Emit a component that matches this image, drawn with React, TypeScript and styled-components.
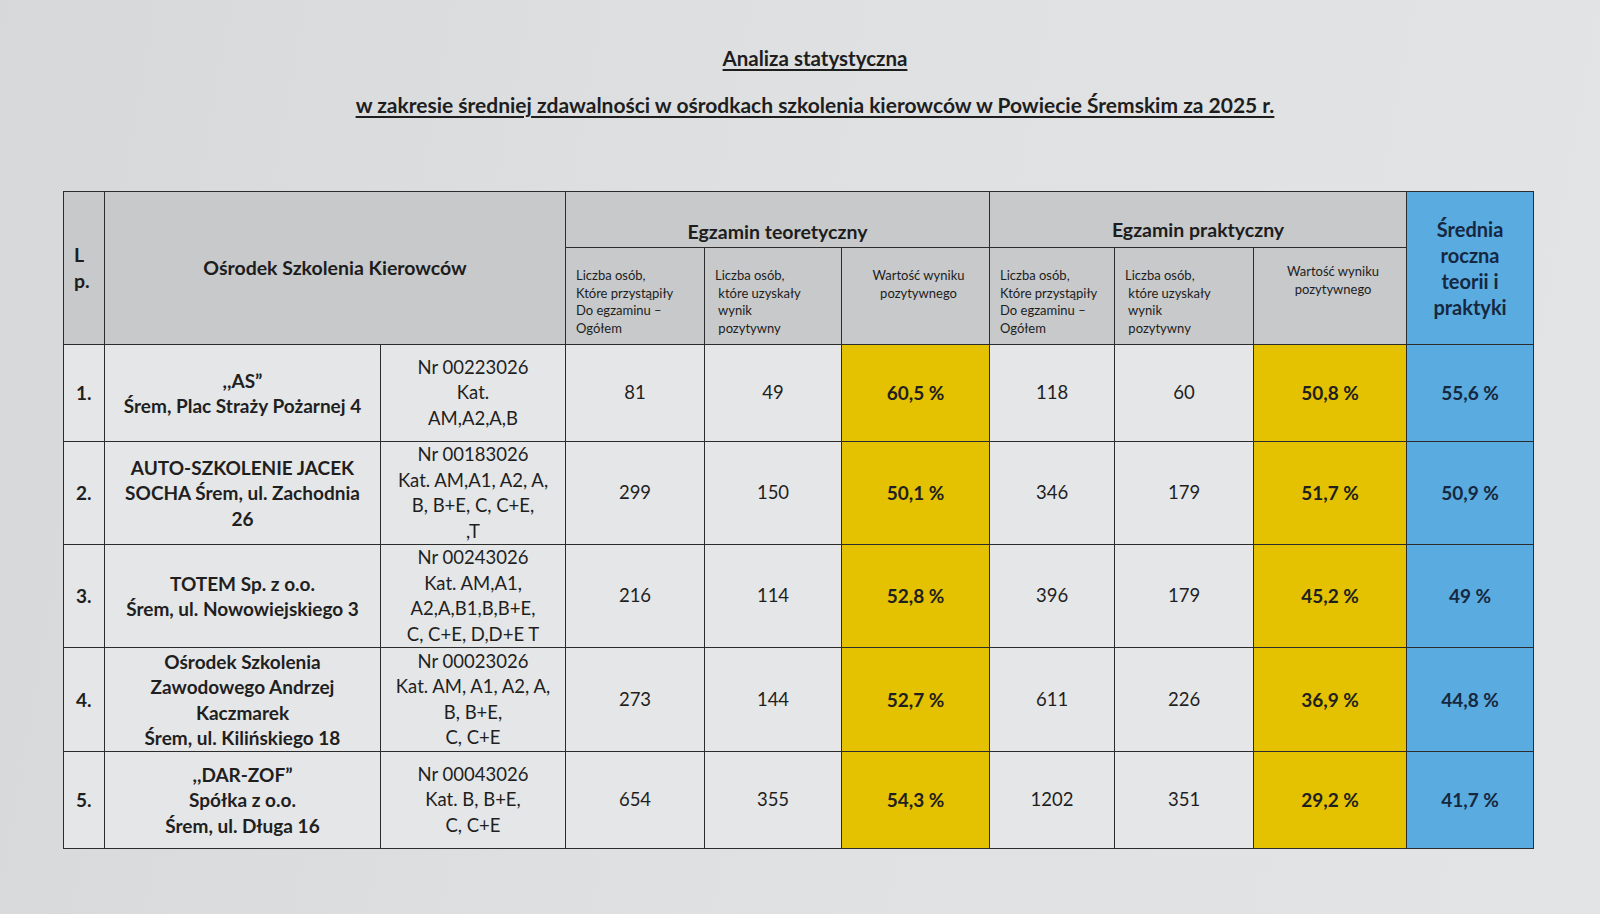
import React from 'react'
import styled, { createGlobalStyle } from 'styled-components'

const GlobalStyle = createGlobalStyle`
  html, body {
    margin: 0;
    padding: 0;
  }
  body {
    background: linear-gradient(100deg, #d6d8d9 0%, #dfe0e1 45%, #e3e4e5 100%);
    font-family: Lato, 'Liberation Sans', sans-serif;
    color: #222;
  }
`

const Page = styled.div`
  width: 1600px;
  height: 914px;
  overflow: hidden;
  box-sizing: border-box;
  padding-top: 44px;
`

const Heading = styled.h1<{ $size: number; $gap: number }>`
  margin: 0 0 ${p => p.$gap}px 0;
  padding-left: 30px;
  text-align: center;
  font-size: ${p => p.$size}px;
  font-weight: 700;
  line-height: 28px;
  color: #1e1e1e;
  text-decoration: underline;
  text-decoration-thickness: 1.5px;
  text-underline-offset: 3px;
`

const Table = styled.table`
  margin-left: 63px;
  width: 1470px;
  border-collapse: collapse;
  table-layout: fixed;
  border: 1.5px solid #2c2c2c;
`

const Cell = styled.td<{ $bg?: string; $align?: string; $bold?: boolean; $navy?: boolean }>`
  border: 1.5px solid #2c2c2c;
  background: ${p => p.$bg || '#e5e6e7'};
  text-align: ${p => p.$align || 'center'};
  font-weight: ${p => (p.$bold ? 700 : 400)};
  color: ${p => (p.$navy ? '#16283f' : '#1f1f1f')};
  font-size: ${p => (p.$bold ? 19 : 18.5)}px;
  line-height: 25.5px;
  padding: 0 2px;
  vertical-align: middle;
`

const HeadCell = styled.th<{ $bg?: string; $align?: string; $valign?: string; $navy?: boolean; $size?: number }>`
  border: 1.5px solid #2c2c2c;
  background: ${p => p.$bg || '#c7c9cb'};
  text-align: ${p => p.$align || 'center'};
  vertical-align: ${p => p.$valign || 'middle'};
  color: ${p => (p.$navy ? '#16283f' : '#1d1d1d')};
  font-size: ${p => p.$size || 19.5}px;
  font-weight: 700;
  line-height: 26px;
  padding: 0;
`

const SubHead = styled.th<{ $align?: string }>`
  border: 1.5px solid #2c2c2c;
  background: #c7c9cb;
  text-align: ${p => p.$align || 'left'};
  vertical-align: top;
  font-size: 13px;
  font-weight: 400;
  line-height: 17.7px;
  color: #1d1d1d;
  padding: 19px 4px 0 10px;
  white-space: nowrap;
`

const LpText = styled.div`
  padding-left: 10px;
  text-align: left;
`

const widths = [41, 276, 185, 139, 137, 148, 125, 139, 153, 127]

type Row = {
  lp: string
  name: string[]
  nr: string[]
  t1: string
  t2: string
  tp: string
  p1: string
  p2: string
  pp: string
  avg: string
  h: number
}

const rows: Row[] = [
  {
    lp: '1.',
    name: [',,AS\u201D', 'Śrem, Plac Straży Pożarnej 4'],
    nr: ['Nr 00223026', 'Kat.', 'AM,A2,A,B'],
    t1: '81', t2: '49', tp: '60,5 %', p1: '118', p2: '60', pp: '50,8 %', avg: '55,6 %', h: 97,
  },
  {
    lp: '2.',
    name: ['AUTO-SZKOLENIE JACEK', 'SOCHA Śrem, ul. Zachodnia', '26'],
    nr: ['Nr 00183026', 'Kat. AM,A1, A2, A,', 'B, B+E, C, C+E,', ',T'],
    t1: '299', t2: '150', tp: '50,1 %', p1: '346', p2: '179', pp: '51,7 %', avg: '50,9 %', h: 102,
  },
  {
    lp: '3.',
    name: ['TOTEM Sp. z o.o.', 'Śrem, ul. Nowowiejskiego 3'],
    nr: ['Nr 00243026', 'Kat. AM,A1,', 'A2,A,B1,B,B+E,', 'C, C+E, D,D+E T'],
    t1: '216', t2: '114', tp: '52,8 %', p1: '396', p2: '179', pp: '45,2 %', avg: '49 %', h: 102,
  },
  {
    lp: '4.',
    name: ['Ośrodek Szkolenia', 'Zawodowego Andrzej', 'Kaczmarek', 'Śrem, ul. Kilińskiego 18'],
    nr: ['Nr 00023026', 'Kat. AM, A1, A2, A,', 'B, B+E,', 'C, C+E'],
    t1: '273', t2: '144', tp: '52,7 %', p1: '611', p2: '226', pp: '36,9 %', avg: '44,8 %', h: 104,
  },
  {
    lp: '5.',
    name: [',,DAR-ZOF\u201D', 'Spółka z o.o.', 'Śrem, ul. Długa 16'],
    nr: ['Nr 00043026', 'Kat. B, B+E,', 'C, C+E'],
    t1: '654', t2: '355', tp: '54,3 %', p1: '1202', p2: '351', pp: '29,2 %', avg: '41,7 %', h: 97,
  },
]

const YELLOW = '#e4c202'
const BLUE = '#5aabdf'

const Lines = ({ items }: { items: string[] }) => (
  <>
    {items.map((t, i) => (
      <div key={i}>{t}</div>
    ))}
  </>
)

const App = () => {
  return (
    <Page>
      <GlobalStyle />
      <Heading $size={20.5} $gap={19}>Analiza statystyczna</Heading>
      <Heading $size={21} $gap={72}>
        w zakresie średniej zdawalności w ośrodkach szkolenia kierowców w Powiecie Śremskim za 2025 r.
      </Heading>
      <Table>
        <colgroup>
          {widths.map((w, i) => (
            <col key={i} style={{ width: w }} />
          ))}
        </colgroup>
        <thead>
          <tr style={{ height: 56 }}>
            <HeadCell rowSpan={2} $align="left">
              <LpText>
                L<br />p.
              </LpText>
            </HeadCell>
            <HeadCell rowSpan={2} colSpan={2}>
              Ośrodek Szkolenia Kierowców
            </HeadCell>
            <HeadCell colSpan={3} $valign="bottom" style={{ paddingBottom: 2 }}>
              Egzamin teoretyczny
            </HeadCell>
            <HeadCell colSpan={3} $valign="bottom" style={{ paddingBottom: 4 }}>
              Egzamin praktyczny
            </HeadCell>
            <HeadCell rowSpan={2} $bg={BLUE} $navy $size={20}>
              Średnia
              <br />
              roczna
              <br />
              teorii i
              <br />
              praktyki
            </HeadCell>
          </tr>
          <tr style={{ height: 97 }}>
            <SubHead>
              Liczba osób,
              <br />
              Które przystąpiły
              <br />
              Do egzaminu –
              <br />
              Ogółem
            </SubHead>
            <SubHead>
              Liczba osób,
              <br />
              &nbsp;które uzyskały
              <br />
              &nbsp;wynik
              <br />
              &nbsp;pozytywny
            </SubHead>
            <SubHead $align="center">
              Wartość wyniku
              <br />
              pozytywnego
            </SubHead>
            <SubHead>
              Liczba osób,
              <br />
              Które przystąpiły
              <br />
              Do egzaminu –
              <br />
              Ogółem
            </SubHead>
            <SubHead>
              Liczba osób,
              <br />
              &nbsp;które uzyskały
              <br />
              &nbsp;wynik
              <br />
              &nbsp;pozytywny
            </SubHead>
            <SubHead $align="center" style={{ paddingTop: 15 }}>
              Wartość wyniku
              <br />
              pozytywnego
            </SubHead>
          </tr>
        </thead>
        <tbody>
          {rows.map(r => (
            <tr key={r.lp} style={{ height: r.h }}>
              <Cell $bold $align="left" style={{ paddingLeft: 12 }}>
                {r.lp}
              </Cell>
              <Cell $bold>
                <Lines items={r.name} />
              </Cell>
              <Cell>
                <Lines items={r.nr} />
              </Cell>
              <Cell>{r.t1}</Cell>
              <Cell>{r.t2}</Cell>
              <Cell $bold $bg={YELLOW}>{r.tp}</Cell>
              <Cell>{r.p1}</Cell>
              <Cell>{r.p2}</Cell>
              <Cell $bold $bg={YELLOW}>{r.pp}</Cell>
              <Cell $bold $bg={BLUE} $navy>{r.avg}</Cell>
            </tr>
          ))}
        </tbody>
      </Table>
    </Page>
  )
}

export default App
